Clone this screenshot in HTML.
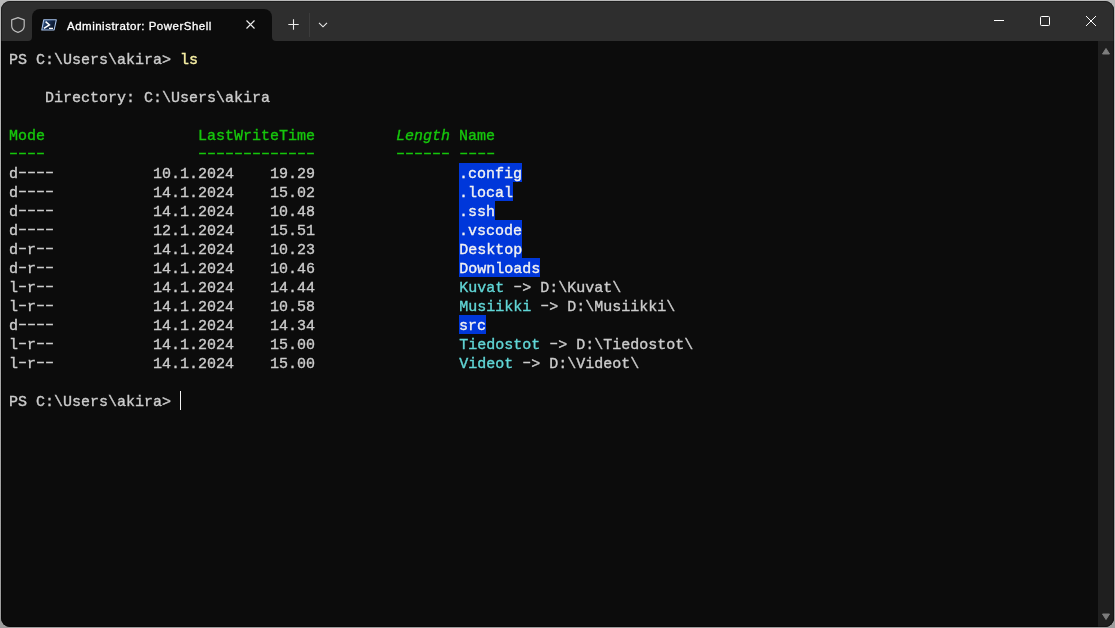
<!DOCTYPE html>
<html><head><meta charset="utf-8">
<style>
html,body{margin:0;padding:0;-webkit-font-smoothing:antialiased;width:1115px;height:628px;overflow:hidden;background:linear-gradient(#b9b9b9,#9d9d9d);}
#edge{position:absolute;left:1px;top:1px;width:1113px;height:626px;border-radius:9px;box-shadow:inset 0 0 0 1px rgba(0,0,0,0.35);pointer-events:none;}
#win{position:absolute;left:1px;top:1px;width:1113px;height:626px;border-radius:9px;overflow:hidden;background:#2e2e2e;}
#tabbar{position:absolute;left:0;top:0;width:1113px;height:40px;background:#2e2e2e;}
#term{position:absolute;left:0;top:40px;width:1113px;height:586px;background:#0c0c0c;}
#tab{position:absolute;left:31px;top:8px;width:240px;height:32px;background:#0c0c0c;border-radius:8px 8px 0 0;}
.flare-l{position:absolute;left:27px;top:36px;width:4px;height:4px;background:#0c0c0c;}
.flare-l::after{content:"";position:absolute;left:0;top:0;width:4px;height:4px;background:#2e2e2e;border-bottom-right-radius:4px;}
.flare-r{position:absolute;left:271px;top:36px;width:4px;height:4px;background:#0c0c0c;}
.flare-r::after{content:"";position:absolute;left:0;top:0;width:4px;height:4px;background:#2e2e2e;border-bottom-left-radius:4px;}
#title{will-change:transform;position:absolute;left:66px;top:18.5px;font-family:"Liberation Sans",sans-serif;font-size:11.5px;letter-spacing:0.5px;-webkit-text-stroke:0.3px #fff;color:#ffffff;white-space:nowrap;}
#scroll{position:absolute;left:1097px;top:40px;width:16px;height:586px;background:#1f1f1f;}
pre{margin:0;will-change:transform;position:absolute;left:8px;top:50px;-webkit-text-stroke:0.35px currentColor;font-family:"Liberation Mono",monospace;font-size:15px;line-height:19px;color:#cccccc;}
.y{color:#f9f1a5}.g{color:#16c60c}.i{font-style:italic}.ds{position:relative;top:-2px}.c{color:#61d6d6}.d{color:#f2f2f2;}
.hl{position:absolute;background:#0037da;height:19px;}
#cursor{position:absolute;left:179px;top:390px;width:1px;height:19px;background:#f2f2f2;}
svg{position:absolute;overflow:visible}
</style></head><body>
<div id="win">
 <div id="tabbar"></div>
 <div class="flare-l"></div><div class="flare-r"></div>
 <div id="tab"></div>
 <svg style="left:-1px;top:-1px" width="1115" height="42">
  <path d="M18 17.6 L11.7 19.9 V26 C11.7 29 14.5 31.3 18 32.4 C21.5 31.3 24.2 29 24.2 26 V19.9 Z" fill="none" stroke="#bdbdbd" stroke-width="1.2" stroke-linejoin="round"/>
  <defs><linearGradient id="pg" x1="0" y1="0" x2="1" y2="0.4"><stop offset="0" stop-color="#3a5e92"/><stop offset="0.6" stop-color="#13284a"/><stop offset="1" stop-color="#0a1426"/></linearGradient></defs>
  <path d="M43.7 19.8 H56.3 L54.1 30 H41.8 Z" fill="url(#pg)" stroke="#a6c2ec" stroke-width="1.1" stroke-linejoin="round"/>
  <path d="M45.6 21.6 L49.4 24.9 L43.9 28.3" fill="none" stroke="#ffffff" stroke-width="1.5"/>
  <path d="M49 28.3 H53" stroke="#ffffff" stroke-width="1.3"/>
  <path d="M246.5 20.5 L254.5 28.5 M254.5 20.5 L246.5 28.5" stroke="#ececec" stroke-width="1.1"/>
  <path d="M293.5 19.3 V29.8 M288.3 24.5 H298.7" stroke="#ececec" stroke-width="1.1"/>
  <path d="M309.5 13 V37" stroke="#3c3c3c" stroke-width="1"/>
  <path d="M319 22.8 L323 26.8 L327 22.8" fill="none" stroke="#ececec" stroke-width="1.1"/>
  <path d="M994 20.5 H1004" stroke="#fff" stroke-width="1"/>
  <rect x="1040.5" y="16.5" width="9" height="9" rx="1" fill="none" stroke="#fff" stroke-width="1"/>
  <path d="M1086 16 L1096 26 M1096 16 L1086 26" stroke="#fff" stroke-width="1"/>
 </svg>
 <div id="title">Administrator: PowerShell</div>
 <div id="term">
 </div>
 <div id="scroll">
  <svg style="left:0;top:0" width="16" height="586">
   <path d="M4.5 13 L8 7.5 L11.5 13 Z" fill="#7d7d7d" stroke="#7d7d7d" stroke-width="1" stroke-linejoin="round"/>
   <path d="M4.5 573 L8 578.5 L11.5 573 Z" fill="#7d7d7d" stroke="#7d7d7d" stroke-width="1" stroke-linejoin="round"/>
  </svg>
 </div>
<div class="hl" style="left:458px;top:162px;width:63px"></div><div class="hl" style="left:458px;top:181px;width:54px"></div><div class="hl" style="left:458px;top:200px;width:36px"></div><div class="hl" style="left:458px;top:219px;width:63px"></div><div class="hl" style="left:458px;top:238px;width:63px"></div><div class="hl" style="left:458px;top:257px;width:81px"></div><div class="hl" style="left:458px;top:314px;width:27px"></div><div id="cursor"></div>
<pre>PS C:\Users\akira&gt; <span class="y">ls</span>

    Directory: C:\Users\akira

<span class="g">Mode                 LastWriteTime         <span class="i">Length</span> Name</span>
<span class="g"><span class="ds">––––</span>                 <span class="ds">–––––––––––––</span>         <span class="ds">––––––</span> <span class="ds">––––</span></span>
d<span class="ds">––––</span>           10.1.2024    19.29                <span class="d">.config</span>
d<span class="ds">––––</span>           14.1.2024    15.02                <span class="d">.local</span>
d<span class="ds">––––</span>           14.1.2024    10.48                <span class="d">.ssh</span>
d<span class="ds">––––</span>           12.1.2024    15.51                <span class="d">.vscode</span>
d<span class="ds">–</span>r<span class="ds">––</span>           14.1.2024    10.23                <span class="d">Desktop</span>
d<span class="ds">–</span>r<span class="ds">––</span>           14.1.2024    10.46                <span class="d">Downloads</span>
l<span class="ds">–</span>r<span class="ds">––</span>           14.1.2024    14.44                <span class="c">Kuvat</span> <span class="ds">–</span>&gt; D:\Kuvat\
l<span class="ds">–</span>r<span class="ds">––</span>           14.1.2024    10.58                <span class="c">Musiikki</span> <span class="ds">–</span>&gt; D:\Musiikki\
d<span class="ds">––––</span>           14.1.2024    14.34                <span class="d">src</span>
l<span class="ds">–</span>r<span class="ds">––</span>           14.1.2024    15.00                <span class="c">Tiedostot</span> <span class="ds">–</span>&gt; D:\Tiedostot\
l<span class="ds">–</span>r<span class="ds">––</span>           14.1.2024    15.00                <span class="c">Videot</span> <span class="ds">–</span>&gt; D:\Videot\

PS C:\Users\akira&gt; </pre>
</div>
<div id="edge"></div>
</body></html>
